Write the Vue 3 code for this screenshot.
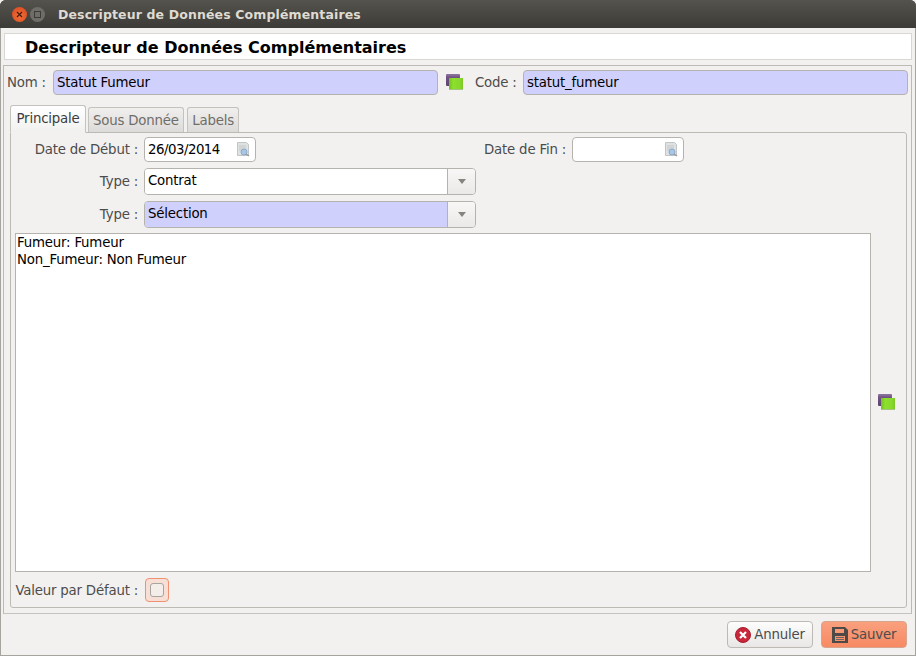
<script setup>
const tabs = [
  { label: "Principale", active: true },
  { label: "Sous Donnée", active: false },
  { label: "Labels", active: false },
]
</script>

<template>
  <div class="window">
    <div class="titlebar">
      <span class="wm-btn wm-close">
        <svg width="7" height="7" viewBox="0 0 7 7"><path d="M1 1l5 5M6 1l-5 5" stroke="#4a1a0a" stroke-width="1.2" /></svg>
      </span>
      <span class="wm-btn wm-max"><i></i></span>
      <span class="wm-title">Descripteur de Données Complémentaires</span>
    </div>

    <div class="body">
      <div class="heading">Descripteur de Données Complémentaires</div>

      <div class="frame">
        <div class="top-row">
          <label class="nom-label">Nom :</label>
          <div class="field required nom-field">Statut Fumeur</div>
          <svg class="stack nom-stack" width="17" height="17" viewBox="0 0 17 17">
            <defs>
              <linearGradient id="front" x1="0" x2="1" y1="0" y2="0">
                <stop offset="0" stop-color="#74c022" />
                <stop offset="0.3" stop-color="#8ee02e" />
                <stop offset="0.8" stop-color="#86d82a" />
                <stop offset="1" stop-color="#7cc628" />
              </linearGradient>
              <linearGradient id="back" x1="0" x2="0" y1="0" y2="1">
                <stop offset="0" stop-color="#8f779d" />
                <stop offset="0.3" stop-color="#6f5282" />
                <stop offset="1" stop-color="#5c4470" />
              </linearGradient>
            </defs>
            <rect x="0" y="0" width="14" height="12" rx="1" fill="url(#back)" />
            <rect x="3" y="4" width="14" height="12" fill="url(#front)" />
            <rect x="3" y="15" width="14" height="1" fill="#a3c484" />
          </svg>
          <label class="code-label">Code :</label>
          <div class="field required code-field">statut_fumeur</div>
        </div>

        <div class="tabs">
          <div v-for="tab in tabs" :key="tab.label" class="tab" :class="{ active: tab.active }">{{ tab.label }}</div>
        </div>

        <div class="panel">
          <div class="row date-row">
            <label class="lbl">Date de Début :</label>
            <div class="field date">
              <span class="date-text">26/03/2014</span>
              <svg class="cal" width="16" height="17" viewBox="0 0 16 17">
                <path d="M1.5 1.5h9l2 2v11h-11z" fill="#dfe2e2" stroke="#c2c5c5" />
                <path d="M3 5h7M3 7h7M3 9h3" stroke="#c4c7c7" />
                <circle cx="8" cy="11" r="3" fill="#a8c6e6" stroke="#8aa9cb" />
                <path d="M10 13l3 2" stroke="#9a9a9a" stroke-width="1.3" />
              </svg>
            </div>
            <label class="lbl-fin">Date de Fin :</label>
            <div class="field date">
              <svg class="cal" width="16" height="17" viewBox="0 0 16 17">
                <path d="M1.5 1.5h9l2 2v11h-11z" fill="#dfe2e2" stroke="#c2c5c5" />
                <path d="M3 5h7M3 7h7M3 9h3" stroke="#c4c7c7" />
                <circle cx="8" cy="11" r="3" fill="#a8c6e6" stroke="#8aa9cb" />
                <path d="M10 13l3 2" stroke="#9a9a9a" stroke-width="1.3" />
              </svg>
            </div>
          </div>

          <div class="row combo-row">
            <label class="lbl">Type :</label>
            <div class="combo">
              <div class="combo-text">Contrat</div>
              <div class="combo-btn"><span class="arrow"></span></div>
            </div>
          </div>

          <div class="row combo-row">
            <label class="lbl">Type :</label>
            <div class="combo">
              <div class="combo-text required">Sélection</div>
              <div class="combo-btn"><span class="arrow"></span></div>
            </div>
          </div>

          <div class="text-row">
            <div class="textarea">Fumeur: Fumeur<br />Non_Fumeur: Non Fumeur</div>
            <svg class="stack" width="17" height="17" viewBox="0 0 17 17">
              <rect x="0" y="0" width="14" height="12" rx="1" fill="url(#back)" />
              <rect x="3" y="4" width="14" height="12" fill="url(#front)" />
              <rect x="3" y="15" width="14" height="1" fill="#a3c484" />
            </svg>
          </div>

          <div class="row default-row">
            <label class="lbl">Valeur par Défaut :</label>
            <div class="check-wrap"><span class="check"></span></div>
          </div>
        </div>
      </div>

      <div class="actions">
        <button class="btn">
          <svg width="16" height="16" viewBox="0 0 16 16">
            <circle cx="8" cy="8" r="7.5" fill="#c8283a" stroke="#a81c2e" />
            <path d="M5 5l6 6M11 5l-6 6" stroke="#fff" stroke-width="2.2" />
          </svg>
          Annuler
        </button>
        <button class="btn save">
          <svg width="16" height="16" viewBox="0 0 16 16">
            <path fill-rule="evenodd" d="M0 0h13l3 3v13H0zM3 2v4h9V2zM3 9v5h10V9z" fill="#4d4a48" />
            <path d="M4 10.5h8M4 12.5h8" stroke="#6b6663" />
          </svg>
          Sauver
        </button>
      </div>
    </div>
  </div>
</template>

<style scoped>
.window {
  width: 916px;
  height: 656px;
  display: flex;
  flex-direction: column;
  font-family: "DejaVu Sans", sans-serif;
  font-size: 13.33px;
  letter-spacing: -0.2px;
  color: #000;
  background: #3c3b37;
  border-radius: 6px 6px 0 0;
  overflow: hidden;
}

.titlebar {
  height: 28px;
  flex: none;
  display: flex;
  align-items: center;
  padding-left: 12px;
  background: linear-gradient(#55534d, #3c3b37);
}

.wm-btn {
  width: 15px;
  height: 15px;
  border-radius: 50%;
  display: flex;
  align-items: center;
  justify-content: center;
}

.wm-close {
  background: radial-gradient(circle at 50% 60%, #f0703a, #d8451c);
}

.wm-max {
  margin-left: 3px;
  background: #6f6d68;
}

.wm-max i {
  width: 7px;
  height: 7px;
  border: 1px solid #3c3b37;
  box-sizing: border-box;
}

.wm-title {
  margin-left: 13px;
  font-size: 12.5px;
  font-weight: bold;
  letter-spacing: 0.13px;
  color: #dfdbd2;
}

.body {
  flex: 1;
  display: flex;
  flex-direction: column;
  background: #f2f1f0;
  border: 1px solid #a5a49e;
  border-top: none;
  padding: 5px 3px 0 2px;
  min-height: 0;
}

.heading {
  height: 27px;
  flex: none;
  box-sizing: border-box;
  margin-left: 1px;
  padding-left: 20px;
  background: #fff;
  border: 1px solid #d9d7d3;
  font-size: 16px;
  font-weight: bold;
  letter-spacing: 0;
  line-height: 27px;
}

.frame {
  flex: 1;
  min-height: 0;
  margin-top: 5px;
  border: 1px solid #bdbab5;
  border-bottom-color: #c5c3be;
  box-sizing: border-box;
  padding: 4px 3px 5px 3px;
  display: flex;
  flex-direction: column;
}

.top-row {
  display: flex;
  align-items: center;
  height: 25px;
  flex: none;
}

.nom-label {
  width: 46px;
  flex: none;
  color: #4c4c4c;
}

.field {
  box-sizing: border-box;
  border: 1px solid #b5b3ae;
  border-radius: 4px;
  background: #fff;
  padding-left: 3px;
  line-height: 23px;
  position: relative;
}

.required {
  background: #d0d0fd;
}

.nom-field {
  width: 385px;
  height: 25px;
}

.nom-stack {
  margin-left: 8px;
  flex: none;
}

.code-label {
  margin-left: 12px;
  width: 48px;
  flex: none;
  color: #4c4c4c;
}

.code-field {
  width: 385px;
  height: 25px;
}

.tabs {
  display: flex;
  align-items: flex-end;
  height: 28px;
  margin-top: 9px;
  margin-left: 3px;
  gap: 2px;
  flex: none;
  position: relative;
  z-index: 1;
}

.tab {
  box-sizing: border-box;
  height: 25px;
  padding: 0 4px;
  line-height: 25px;
  color: #6f6d69;
  background: linear-gradient(#f0efee, #dcdbd9);
  border: 1px solid #c4c2bd;
  border-bottom: none;
  border-radius: 3px 3px 0 0;
}

.tab:last-child {
  margin-left: 1px;
  padding: 0 4.5px;
}

.tab.active {
  height: 28px;
  padding: 0 5.5px;
  line-height: 26px;
  color: #3c3c3c;
  border-bottom: 1px solid #f2f1f0;
  margin-bottom: -1px;
  background: linear-gradient(#fff, #f2f1f0);
}

.panel {
  flex: 1;
  min-height: 0;
  margin-left: 3px;
  margin-right: 1px;
  border: 1px solid #bdbab5;
  border-radius: 0 3px 3px 3px;
  padding: 4px 0 4px 4px;
  display: flex;
  flex-direction: column;
}

.row {
  display: flex;
  align-items: center;
  flex: none;
}

.date-row {
  height: 25px;
}

.combo-row {
  height: 27px;
  margin-top: 6px;
}

.lbl {
  width: 123px;
  flex: none;
  text-align: right;
  white-space: nowrap;
  color: #4c4c4c;
  margin-right: 6px;
}

.lbl-fin {
  width: 310px;
  flex: none;
  text-align: right;
  color: #4c4c4c;
  margin-right: 6px;
}

.date {
  width: 112px;
  height: 25px;
}

.date-text {
  letter-spacing: -0.5px;
}

.cal {
  position: absolute;
  right: 3px;
  top: 3px;
}

.combo {
  display: flex;
  width: 332px;
  height: 27px;
  box-sizing: border-box;
  border: 1px solid #b5b3ae;
  border-radius: 4px;
  overflow: hidden;
}

.combo-text {
  flex: 1;
  padding-left: 3px;
  line-height: 24px;
  background: #fff;
}

.combo-text.required {
  background: #d0d0fd;
}

.combo-btn {
  width: 27px;
  flex: none;
  border-left: 1px solid #b5b3ae;
  background: linear-gradient(#f8f7f6, #eae9e7);
  display: flex;
  align-items: center;
  justify-content: center;
}

.arrow {
  border-left: 4px solid transparent;
  border-right: 4px solid transparent;
  border-top: 5px solid #85847f;
}

.text-row {
  flex: 1;
  min-height: 0;
  display: flex;
  align-items: center;
  margin-top: 5px;
}

.textarea {
  align-self: stretch;
  width: 856px;
  flex: none;
  box-sizing: border-box;
  background: #fff;
  border: 1px solid #b5b3ae;
  padding: 0 0 0 1px;
  line-height: 17px;
}

.text-row .stack {
  margin-left: 7px;
}

.default-row {
  height: 26px;
  margin-top: 5px;
}

.check-wrap {
  width: 24px;
  height: 24px;
  margin-left: 1px;
  box-sizing: border-box;
  border: 1px solid #f09070;
  border-radius: 4px;
  background: #f8dfd6;
  display: flex;
  align-items: center;
  justify-content: center;
}

.check {
  width: 14px;
  height: 14px;
  box-sizing: border-box;
  border: 1px solid #a8a49e;
  border-radius: 3px;
  background: #f4eeea;
}

.actions {
  flex: none;
  height: 41px;
  display: flex;
  align-items: center;
  justify-content: flex-end;
  gap: 8px;
  padding-right: 5px;
}

.btn {
  width: 86px;
  height: 27px;
  padding: 0;
  box-sizing: border-box;
  display: flex;
  align-items: center;
  justify-content: center;
  gap: 3px;
  font-family: inherit;
  font-size: 13.33px;
  letter-spacing: -0.2px;
  color: #4c4c4c;
  border: 1px solid #bdbab5;
  border-radius: 4px;
  background: linear-gradient(#fdfdfd, #e8e7e5);
}

.btn.save {
  background: linear-gradient(#f9a07e, #f78a63);
  border-color: #d9a48e;
}
</style>

<style>
html,
body {
  margin: 0;
  background: #f2f1f0;
}
</style>
